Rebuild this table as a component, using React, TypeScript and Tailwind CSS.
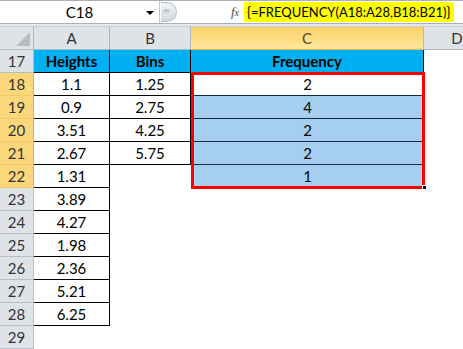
import React from "react"

const font = { fontFamily: "Lato, 'Liberation Sans', sans-serif" }

const rows = [
  { n: 17, a: "Heights", b: "Bins", c: "Frequency" },
  { n: 18, a: "1.1", b: "1.25", c: "2" },
  { n: 19, a: "0.9", b: "2.75", c: "4" },
  { n: 20, a: "3.51", b: "4.25", c: "2" },
  { n: 21, a: "2.67", b: "5.75", c: "2" },
  { n: 22, a: "1.31", b: "", c: "1" },
  { n: 23, a: "3.89" },
  { n: 24, a: "4.27" },
  { n: 25, a: "1.98" },
  { n: 26, a: "2.36" },
  { n: 27, a: "5.21" },
  { n: 28, a: "6.25" },
  { n: 29 },
]

function FormulaBar() {
  return (
    <div className="flex flex-col">
      <div className="flex h-[24px] border-y border-[#a7afb9] bg-white">
        <div className="relative flex w-[160px] shrink-0 items-center justify-center border-r border-[#c5cad1] text-[15px] text-black">
          C18
          <span className="absolute right-[5px] top-[10px] h-0 w-0 border-x-[4px] border-t-[4px] border-x-transparent border-t-black" />
        </div>
        <div className="flex w-[84px] shrink-0 items-center bg-white">
          <div className="ml-[1px] flex h-[20px] w-[16px] items-center rounded-r-full border border-l-0 border-[#b9bec6] bg-gradient-to-b from-[#f4f5f7] to-[#d5d9de]">
            <span className="ml-[2px] h-[7px] w-[7px] rounded-full bg-gradient-to-b from-[#b9bcc1] to-[#eceef0]" />
          </div>
          <span className="ml-auto mr-[5px] text-[13px] italic text-[#444]" style={{ fontFamily: "'Liberation Serif', serif" }}>
            f<span className="text-[10px]">x</span>
          </span>
        </div>
        <div className="flex min-w-0 flex-1 items-center overflow-hidden">
          <span className="whitespace-nowrap bg-[#ffff00] px-[3px] py-[1px] text-[13px] leading-[18px] text-black">
            {"{=FREQUENCY(A18:A28,B18:B21)}"}
          </span>
        </div>
      </div>
      <div className="h-[3px] border-b border-[#c9ced5] bg-[#e3e6ea]" />
    </div>
  )
}

function ColumnHeaders() {
  return (
    <div className="flex h-[23px] text-[15px]">
      <div className="relative w-[34px] shrink-0 border-r border-b border-[#b1b7bf] bg-[#dfe2e7]">
        <svg className="absolute bottom-[3px] right-[3px]" width="14" height="14" viewBox="0 0 14 14">
          <polygon points="14,0 14,14 0,14" fill="#b7bcc3" />
        </svg>
      </div>
      <div className="flex w-[76px] shrink-0 items-center justify-center border-r border-b border-[#b1b7bf] bg-[#dfe2e7] text-[#333]">A</div>
      <div className="flex w-[81px] shrink-0 items-center justify-center border-r border-b border-[#b1b7bf] bg-[#dfe2e7] text-[#333]">B</div>
      <div className="flex w-[233px] shrink-0 items-center justify-center border-r border-b border-[#f0b34a] bg-gradient-to-b from-[#f9d067] to-[#ffe99c] text-[#5b4a2c]">C</div>
      <div className="flex w-[66px] shrink-0 items-center justify-center border-b border-[#b1b7bf] bg-[#dfe2e7] text-[#333]">D</div>
    </div>
  )
}

export default function App() {
  return (
    <div className="h-[349px] w-[463px] overflow-hidden bg-white" style={font}>
      <FormulaBar />
      <ColumnHeaders />
      <div className="relative">
        {rows.map((r) => {
          const sel = r.n >= 18 && r.n <= 22
          const head = r.n === 17
          return (
            <div key={r.n} className="flex h-[23px] text-[15px] text-black">
              <div
                className={
                  sel
                    ? "flex w-[34px] shrink-0 items-center justify-center border-r border-b border-r-[#f0a93c] border-b-[#f3c766] bg-[#fad77b] text-[#333]"
                    : "flex w-[34px] shrink-0 items-center justify-center border-r border-b border-[#b8bec6] bg-[#dfe2e7] text-[#333]"
                }
              >
                {r.n}
              </div>
              <div
                className={
                  head
                    ? "flex w-[76px] shrink-0 items-center justify-center border-r border-b border-black bg-[#00b0f0] font-bold"
                    : r.a
                    ? "flex w-[76px] shrink-0 items-center justify-center border-r border-b border-black"
                    : "w-[76px] shrink-0"
                }
              >
                {r.a}
              </div>
              <div
                className={
                  head
                    ? "flex w-[81px] shrink-0 items-center justify-center border-r border-b border-black bg-[#00b0f0] font-bold"
                    : r.b
                    ? "flex w-[81px] shrink-0 items-center justify-center border-r border-b border-black"
                    : "w-[81px] shrink-0"
                }
              >
                {r.b}
              </div>
              <div
                className={
                  head
                    ? "flex w-[233px] shrink-0 items-center justify-center border-r border-b border-black bg-[#00b0f0] font-bold"
                    : r.n === 18
                    ? "flex w-[233px] shrink-0 items-center justify-center border-b border-[#13294a] bg-white"
                    : sel
                    ? "flex w-[233px] shrink-0 items-center justify-center border-b border-[#13294a] bg-[#a6cfef]"
                    : "w-[233px] shrink-0"
                }
              >
                {r.c}
              </div>
            </div>
          )
        })}
        {/* selection outline */}
        <div className="pointer-events-none absolute left-[191px] top-[22px] h-[117px] w-[234px] border-[3px] border-[#ff0000]" />
        <div className="absolute left-[422px] top-[135px] h-[5px] w-[5px] border border-white bg-black" />
      </div>
    </div>
  )
}
